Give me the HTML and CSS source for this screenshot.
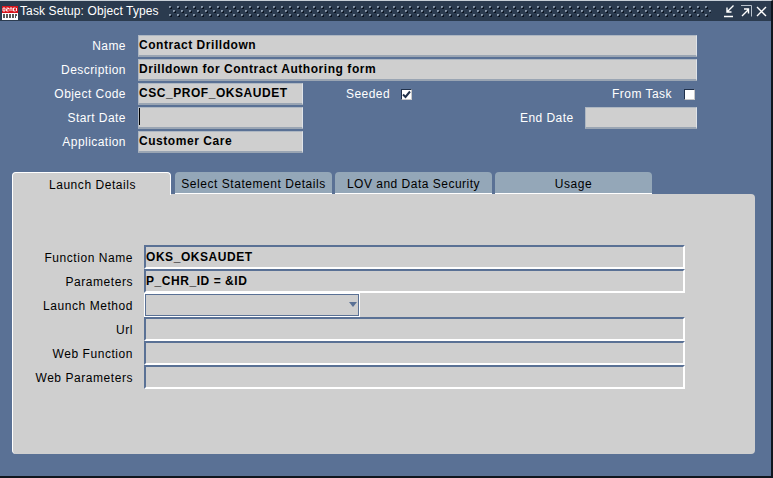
FILE: index.html
```html
<!DOCTYPE html>
<html lang="en">
<head>
<meta charset="utf-8">
<title>Task Setup: Object Types</title>
<link rel="stylesheet" href="styles.css">
</head>
<body>
<div class="window">
  <header class="titlebar">
    <svg class="logo" width="16" height="14" viewBox="0 0 16 14"><rect width="16" height="14" fill="#fff"/><rect y="0" width="16" height="7" fill="#d8141c"/><path d="M1 2h2v3H1zM4.500 2h2v1h-2v2h2M8 5V2h2v3M11.500 2h2M11.500 2v3h2M14.500 2v3" fill="none" stroke="#fff" stroke-width=".9"/><path d="M1 9h14M1 11h13" stroke="#222" stroke-width="1.300" stroke-dasharray="2 1"/></svg>
    <span class="title">Task Setup: Object Types</span>
    <svg class="grip" height="12" aria-hidden="true">
      <defs>
        <pattern id="dots" width="8" height="8" patternUnits="userSpaceOnUse">
          <rect x="0" y="0" width="2" height="2" fill="#8a99aa"/><rect x="1" y="1" width="2" height="2" fill="#0c1420"/><rect x="1" y="1" width="1" height="1" fill="#5f7186"/>
          <rect x="4" y="4" width="2" height="2" fill="#8a99aa"/><rect x="5" y="5" width="2" height="2" fill="#0c1420"/><rect x="5" y="5" width="1" height="1" fill="#5f7186"/>
        </pattern>
      </defs>
      <rect width="100%" height="12" fill="url(#dots)"/>
    </svg>
    <div class="winbtns">
      <svg width="14" height="14" viewBox="0 0 14 14"><path d="M1 12.500h9M10.500 1.500L4 8M4 3.500v4.500h4.500" fill="none" stroke="#fff" stroke-width="1.400"/></svg>
      <svg width="11" height="14" viewBox="0 0 11 14"><path d="M0 1.500h10.500v11" fill="none" stroke="#b8c2cc" stroke-width="1"/><path d="M1 12L7 6M3 5h4.500v4.500" fill="none" stroke="#fff" stroke-width="1.400"/></svg>
      <svg width="11" height="11" viewBox="0 0 11 11"><path d="M1 1l9 9M10 1l-9 9" fill="none" stroke="#fff" stroke-width="1.400"/></svg>
    </div>
  </header>

  <section class="form">
    <div class="row">
      <label class="label">Name</label>
      <div class="field wide">Contract Drilldown</div>
    </div>
    <div class="row">
      <label class="label">Description</label>
      <div class="field wide">Drilldown for Contract Authoring form</div>
    </div>
    <div class="row">
      <label class="label">Object Code</label>
      <div class="field short">CSC_PROF_OKSAUDET</div>
      <span class="check-label seeded">Seeded</span>
      <span class="check on"><svg width="9" height="9" viewBox="0 0 9 9"><path d="M1 4.500l2.500 2.500L8 1.500" fill="none" stroke="#20304a" stroke-width="2"/></svg></span>
      <span class="check-label fromtask">From Task</span>
      <span class="check"></span>
    </div>
    <div class="row">
      <label class="label">Start Date</label>
      <div class="field short"><span class="caret"></span></div>
      <span class="check-label enddate">End Date</span>
      <div class="field enddate-field"></div>
    </div>
    <div class="row">
      <label class="label">Application</label>
      <div class="field short">Customer Care</div>
    </div>
  </section>

  <nav class="tabs">
    <div class="tab active">Launch Details</div>
    <div class="tab">Select Statement Details</div>
    <div class="tab">LOV and Data Security</div>
    <div class="tab">Usage</div>
  </nav>
  <section class="panel">
    <div class="prow"><label class="plabel">Function Name</label><div class="pfield">OKS_OKSAUDET</div></div>
    <div class="prow"><label class="plabel">Parameters</label><div class="pfield">P_CHR_ID = &amp;ID</div></div>
    <div class="prow"><label class="plabel">Launch Method</label><div class="pfield combo"><span class="arrow"></span></div></div>
    <div class="prow"><label class="plabel">Url</label><div class="pfield"></div></div>
    <div class="prow"><label class="plabel">Web Function</label><div class="pfield"></div></div>
    <div class="prow"><label class="plabel">Web Parameters</label><div class="pfield"></div></div>
  </section>
</div>
</body>
</html>
```
FILE: styles.css
```css
html, body { margin: 0; padding: 0; }
body { width: 773px; height: 478px; overflow: hidden; background: #5a7195; font-family: "Liberation Sans", Arial, sans-serif; font-size: 12px; }
.window { width: 773px; height: 478px; box-sizing: border-box; display: flex; flex-direction: column; background: #5a7195; border-top: 1px solid #c8d0d8; border-right: 2px solid #10161e; border-bottom: 2px solid #10161e; }
.titlebar { height: 20px; background: #2b3b4f; display: flex; align-items: center; padding-left: 2px; color: #fff; flex: none; }
.logo { flex: none; margin-top: 3px; }
.title { margin-left: 2px; font-size: 12px; letter-spacing: .12px; white-space: nowrap; }
.grip { flex: 1; min-width: 0; height: 12px; margin: 1px 12px 0 10px; }
.winbtns { display: flex; align-items: center; gap: 4px; width: 48px; flex: none; }
.form { padding-top: 14px; height: 137px; flex: none; display: flex; flex-direction: column; gap: 2px; }
.row { height: 22px; display: flex; align-items: center; color: #fff; }
.label { width: 126px; margin-right: 12px; text-align: right; letter-spacing: .45px; flex: none; }
.field { height: 22px; box-sizing: border-box; background: #cfcfcf; border: 1px solid #aeb7c2; border-right-color: #dfe3e8; border-bottom: 2px solid #9aa5b3; color: #000; font-weight: bold; font-size: 12px; line-height: 19px; padding-left: 0; letter-spacing: .55px; white-space: nowrap; flex: none; }
.wide { width: 559px; }
.short { width: 165px; }
.check-label { letter-spacing: .45px; }
.seeded { margin-left: 43px; }
.check { width: 11px; height: 11px; box-sizing: border-box; background: #fff; border: 1px solid #20304a; border-right-color: #c8c8c8; border-bottom-color: #c8c8c8; display: flex; align-items: center; justify-content: center; flex: none; }
.on { margin-left: 11px; }
.fromtask { margin-left: 200px; }
.fromtask + .check { margin-left: 12px; }
.enddate { margin-left: 217px; }
.enddate-field { width: 112px; margin-left: 11px; }
.caret { display: block; width: 1px; height: 17px; background: #000; }
.tabs { display: flex; height: 22px; margin-left: 12px; gap: 3px; flex: none; }
.tab { width: 157px; height: 22px; box-sizing: border-box; background: #94a7b8; border-radius: 4px 4px 0 0; text-align: center; line-height: 25px; color: #000; letter-spacing: .55px; white-space: nowrap; border-bottom: 1px solid #fff; }
.tab:nth-child(3) { letter-spacing: .5px; }
.tab.active { width: 159px; height: 23px; margin-right: 1px; padding-left: 2px; background: #cfcfcf; border: 1px solid #fff; border-bottom: 0; position: relative; z-index: 1; line-height: 25px; }
.panel { width: 743px; height: 260px; box-sizing: border-box; margin-left: 12px; background: #cfcfcf; border-radius: 0 4px 4px 4px; padding-top: 51px; border-left: 1px solid #fff; display: flex; flex-direction: column; }
.prow { height: 24px; display: flex; align-items: center; }
.plabel { width: 120px; margin-right: 11px; text-align: right; letter-spacing: .55px; flex: none; padding-top: 1px; }
.pfield { width: 541px; height: 24px; box-sizing: border-box; border: 2px solid #5a7195; border-right-color: #fff; border-bottom-color: #fff; font-weight: bold; line-height: 20px; padding-left: 0; letter-spacing: .55px; position: relative; flex: none; }
.combo { width: 216px; border: 1px solid #fff; outline: 1px solid #5a7195; outline-offset: -2px; }
.arrow { position: absolute; right: 2px; top: 8px; width: 0; height: 0; border: 4px solid transparent; border-top: 5px solid #5a7195; border-bottom: 0; }
```
